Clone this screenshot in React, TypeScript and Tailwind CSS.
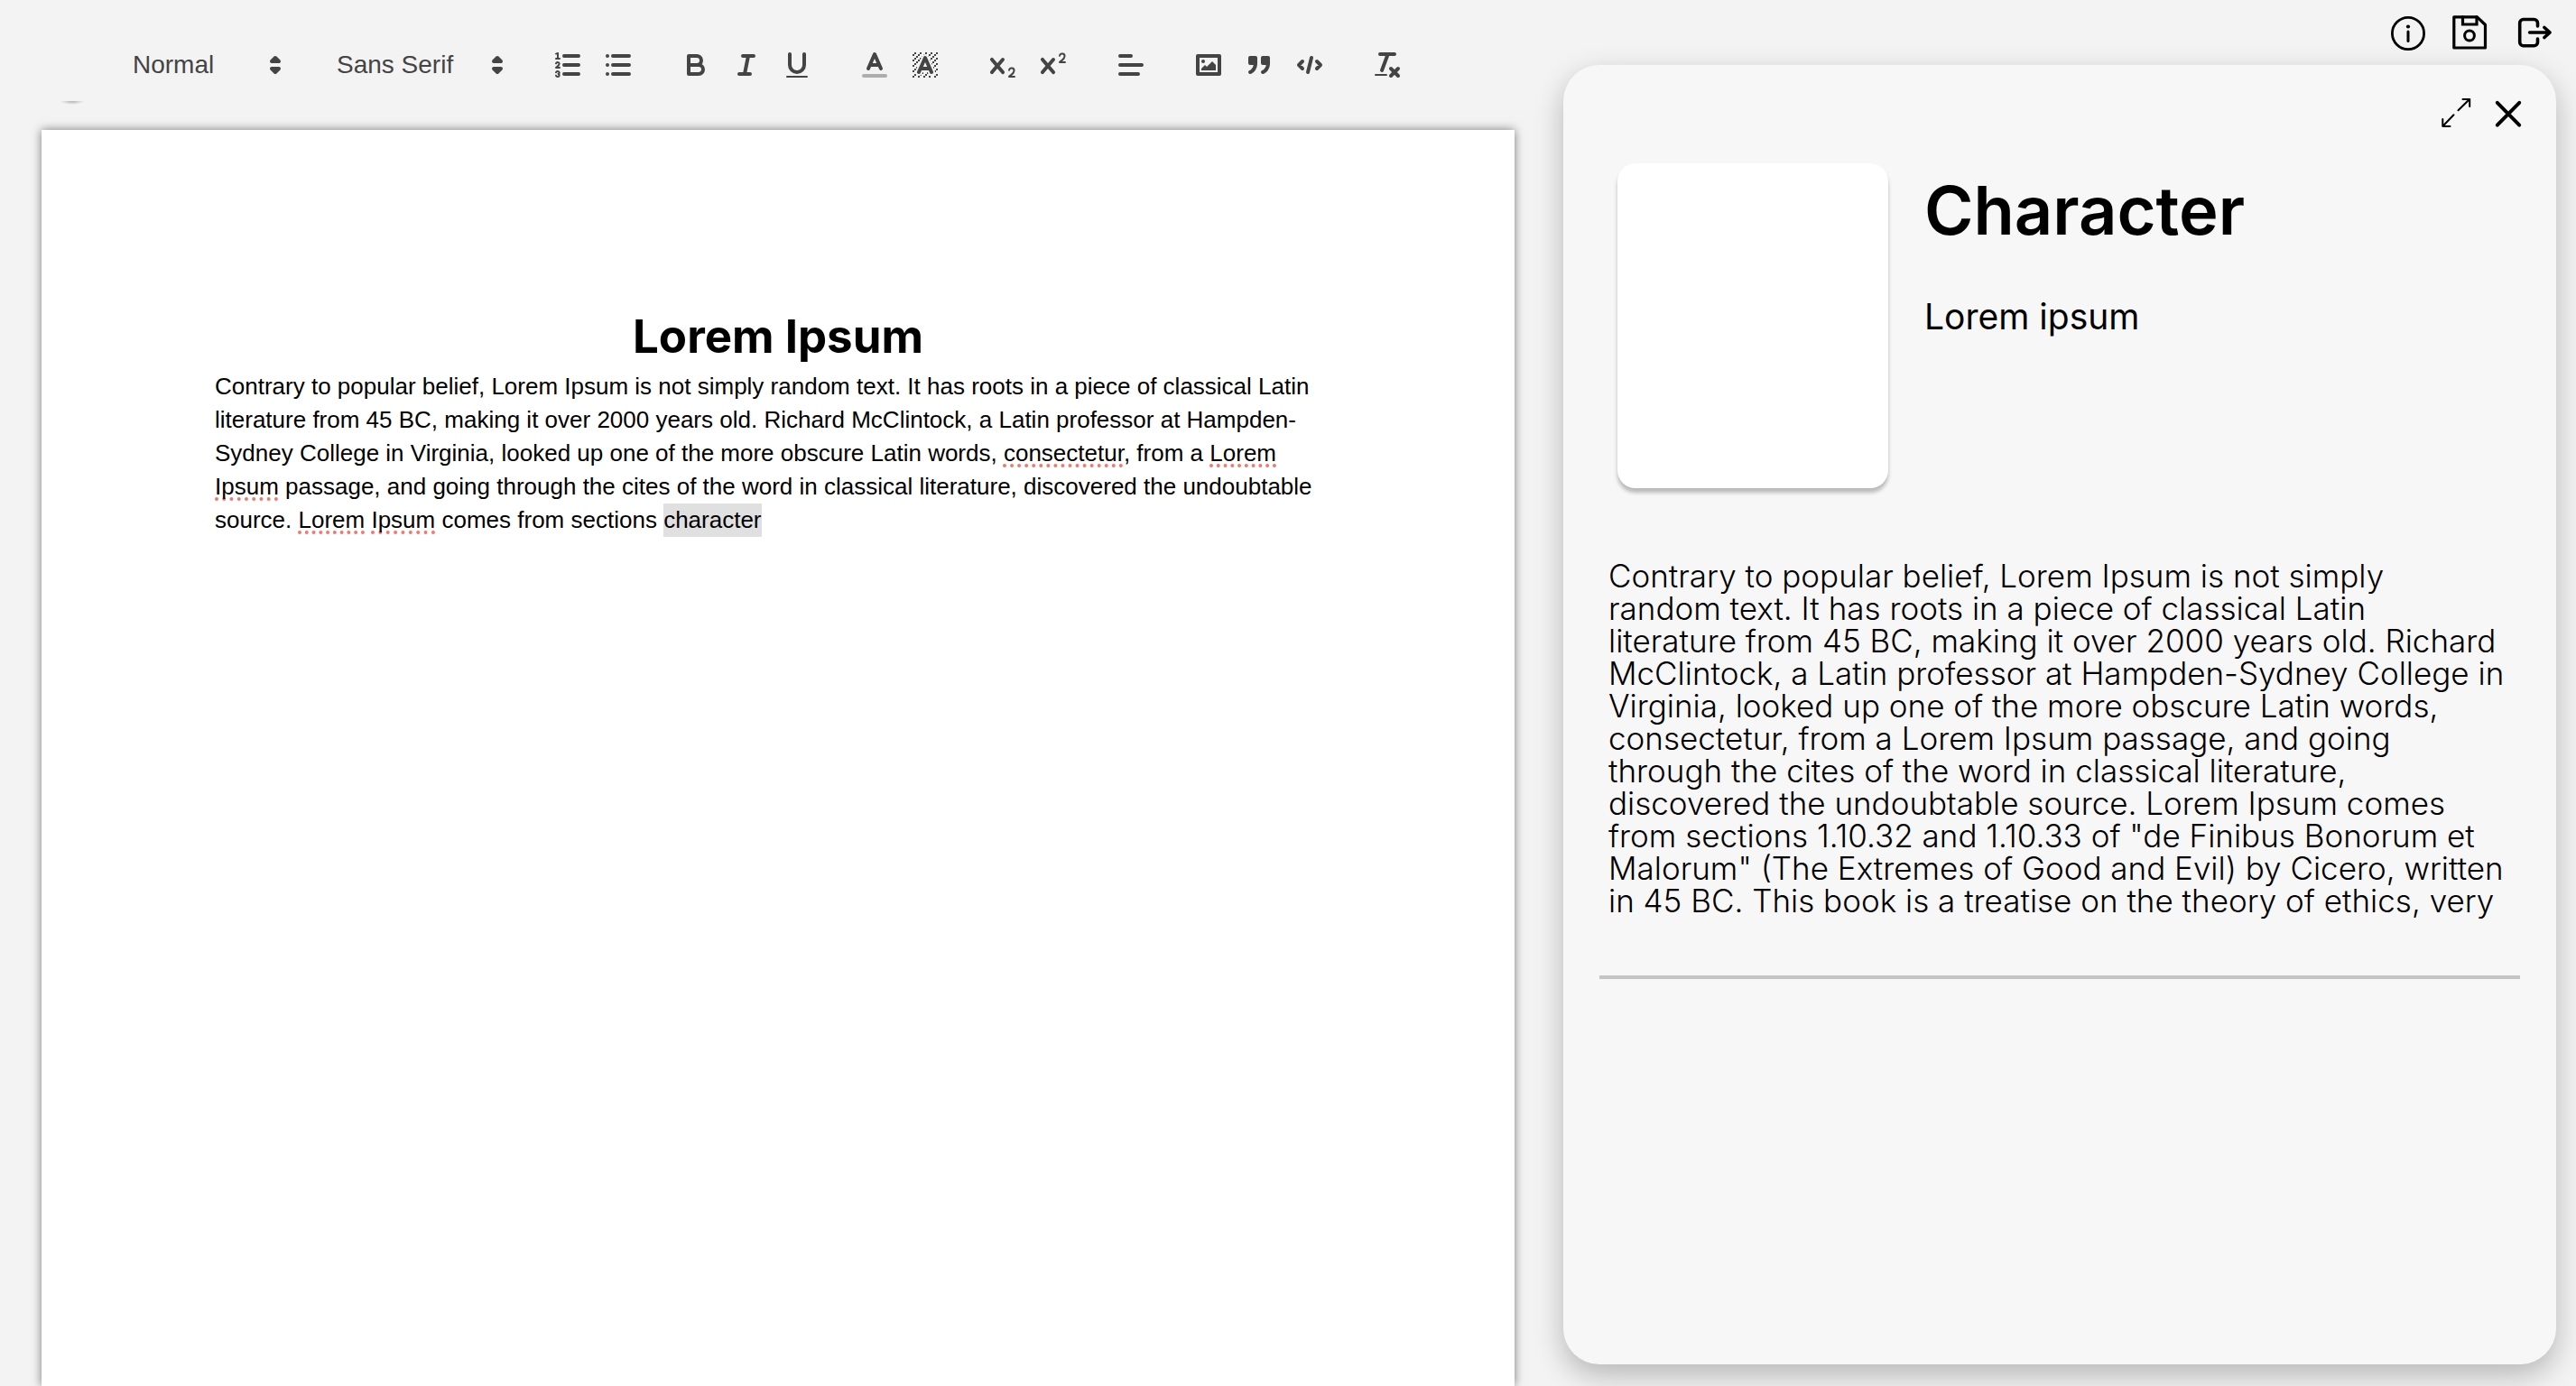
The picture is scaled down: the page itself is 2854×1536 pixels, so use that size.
import type { ReactNode } from 'react';

const stroke = 'fill-none stroke-[#444] stroke-2 [stroke-linecap:round] [stroke-linejoin:round]';
const solid = 'fill-[#444] stroke-[#444] stroke-2 [stroke-linecap:round] [stroke-linejoin:round]';
const thin = 'fill-none stroke-[#444] stroke-1 [stroke-linecap:round] [stroke-linejoin:round]';
const fill = 'fill-[#444]';

function Glyph({ children }: { children: ReactNode }) {
  return (
    <svg viewBox="0 0 18 18" className="size-9" aria-hidden="true">
      {children}
    </svg>
  );
}

function ToolButton({ label, children }: { label: string; children: ReactNode }) {
  return (
    <button type="button" aria-label={label} className="flex h-12 w-14 items-center justify-center">
      <Glyph>{children}</Glyph>
    </button>
  );
}

function Picker({ label, options, width }: { label: string; options: string[]; width: string }) {
  return (
    <label className={`relative flex h-12 items-center text-[#444] ${width}`}>
      <span className="sr-only">{label}</span>
      <select className="h-full w-full appearance-none bg-transparent pl-[18px] text-[28px] leading-normal font-medium outline-none">
        {options.map((o) => (
          <option key={o}>{o}</option>
        ))}
      </select>
      <svg viewBox="0 0 18 18" className="pointer-events-none absolute right-0.5 size-9" aria-hidden="true">
        <polygon className={solid} points="7 11 9 13 11 11 7 11" />
        <polygon className={solid} points="7 7 9 5 11 7 7 7" />
      </svg>
    </label>
  );
}

const hatchCells = [
  [4, 4], [2, 6], [3, 5], [4, 7], [2, 12], [2, 9], [2, 15], [3, 8], [12, 2], [11, 3], [2, 3], [6, 2], [3, 2],
  [5, 3], [9, 2], [15, 14], [13, 7], [15, 5], [14, 6], [15, 8], [14, 9], [14, 3], [15, 2], [12, 5], [13, 4],
  [9, 14], [8, 15], [5, 15], [11, 15], [14, 15], [15, 11],
];

function Toolbar() {
  return (
    <div role="toolbar" aria-label="Formatting" className="flex h-28 items-center gap-[30px] pt-12 pr-4 pb-4 pl-[83px]">
      <Picker label="Heading" options={['Normal', 'Heading 1', 'Heading 2']} width="w-[196px]" />
      <Picker label="Font" options={['Sans Serif', 'Serif', 'Monospace']} width="w-[216px]" />
      <div className="flex">
        <ToolButton label="Ordered list">
          <path className={stroke} d="M7 4H15M7 9H15M7 14H15" />
          <path className={thin} d="M2.5 5.5H4.5" />
          <path className={fill} d="M3.5,6A0.5,0.5,0,0,1,3,5.5V3.085l-0.276.138A0.5,0.5,0,0,1,2.053,3c-0.124-.247-0.023-0.324.224-0.447l1-.5A0.5,0.5,0,0,1,4,2.5v3A0.5,0.5,0,0,1,3.5,6Z" />
          <path className={thin} d="M4.5,10.5h-2c0-.234,1.85-1.076,1.85-2.234A0.959,0.959,0,0,0,2.5,8.156" />
          <path className={thin} d="M2.5,14.846a0.959,0.959,0,0,0,1.85-.109A0.7,0.7,0,0,0,3.75,14a0.688,0.688,0,0,0,.6-0.736,0.959,0.959,0,0,0-1.85-.109" />
        </ToolButton>
        <ToolButton label="Bullet list">
          <path className={stroke} d="M6 4H15M6 9H15M6 14H15M3 4H3M3 9H3M3 14H3" />
        </ToolButton>
      </div>
      <div className="flex">
        <ToolButton label="Bold">
          <path className={stroke} d="M5,4H9.5A2.5,2.5,0,0,1,12,6.5v0A2.5,2.5,0,0,1,9.5,9H5V4Z" />
          <path className={stroke} d="M5,9h5.5A2.5,2.5,0,0,1,13,11.5v0A2.5,2.5,0,0,1,10.5,14H5V9Z" />
        </ToolButton>
        <ToolButton label="Italic">
          <path className={stroke} d="M7 4H13M5 14H11M8 14L10 4" />
        </ToolButton>
        <ToolButton label="Underline">
          <path className={stroke} d="M5,3V9a4.012,4.012,0,0,0,4,4H9a4.012,4.012,0,0,0,4-4V3" />
          <rect className={fill} height="1" rx="0.5" width="12" x="3" y="15" />
        </ToolButton>
      </div>
      <div className="flex">
        <ToolButton label="Text colour">
          <path className={`${stroke} opacity-40`} d="M3 15H15" />
          <path className={stroke} d="M5.5 11L9 3L12.5 11M11.63 9H6.38" />
        </ToolButton>
        <ToolButton label="Background colour">
          <g className={fill}>
            {hatchCells.map(([x, y]) => (
              <rect key={`${x}-${y}`} x={x} y={y} width="1" height="1" />
            ))}
            <polygon points="6 6.868 6 6 5 6 5 7 5.942 7 6 6.868" />
            <polygon points="6.817 5 6 5 6 6 6.38 6 6.817 5" />
            <polygon points="4 11.439 4 11 3 11 3 12 3.755 12 4 11.439" />
            <polygon points="4.63 10 4 10 4 11 4.192 11 4.63 10" />
            <path d="M10.832,4.2L11,4.582V4H10.708A1.948,1.948,0,0,1,10.832,4.2Z" />
            <path d="M7,4.582L7.168,4.2A1.929,1.929,0,0,1,7.292,4H7V4.582Z" />
            <path d="M8,13H7.683l-0.351.8a1.933,1.933,0,0,1-.124.2H8V13Z" />
            <path d="M9,3H8V3.282A1.985,1.985,0,0,1,9,3Z" />
            <polygon points="13.447 10.174 13.469 10.225 13.472 10.232 13.808 11 14 11 14 10 13.37 10 13.447 10.174" />
            <path d="M3.775,14H3v1H4V14.314A1.97,1.97,0,0,1,3.775,14Z" />
            <polygon points="12 6.868 12 6 11.62 6 12 6.868" />
            <polygon points="12.933 9 13 9 13 8 12.495 8 12.933 9" />
            <path d="M6,14.926V15H7V14.316A1.993,1.993,0,0,1,6,14.926Z" />
            <path d="M10.668,13.8L10.317,13H10v1h0.792A1.947,1.947,0,0,1,10.668,13.8Z" />
            <path d="M14.332,12.2a1.99,1.99,0,0,1,.166.8H15V12H14.245Z" />
          </g>
          <path className={stroke} d="M5.5 13L9 5L12.5 13M11.63 11H6.38" />
        </ToolButton>
      </div>
      <div className="flex">
        <ToolButton label="Subscript">
          <path className={fill} d="M15.5,15H13.861a3.858,3.858,0,0,0,1.914-2.975,1.8,1.8,0,0,0-1.6-1.751A1.921,1.921,0,0,0,12.021,11.7a0.50013,0.50013,0,1,0,.957.291h0a0.914,0.914,0,0,1,1.053-.725,0.81,0.81,0,0,1,.744.762c0,1.076-1.16971,1.86982-1.93971,2.43082A1.45639,1.45639,0,0,0,12,15.5a0.5,0.5,0,0,0,.5.5h3A0.5,0.5,0,0,0,15.5,15Z" />
          <path className={fill} d="M9.65,5.241a1,1,0,0,0-1.409.108L6,7.964,3.759,5.349A1,1,0,0,0,2.192,6.59178Q2.21541,6.6213,2.241,6.649L4.684,9.5,2.241,12.35A1,1,0,0,0,3.71,13.70722q0.02557-.02768.049-0.05722L6,11.036,8.241,13.65a1,1,0,1,0,1.567-1.24277Q9.78459,12.3777,9.759,12.35L7.316,9.5,9.759,6.651A1,1,0,0,0,9.65,5.241Z" />
        </ToolButton>
        <ToolButton label="Superscript">
          <path className={fill} d="M15.5,7H13.861a4.015,4.015,0,0,0,1.914-2.975,1.8,1.8,0,0,0-1.6-1.751A1.922,1.922,0,0,0,12.021,3.7a0.5,0.5,0,1,0,.957.291,0.917,0.917,0,0,1,1.053-.725,0.81,0.81,0,0,1,.744.762c0,1.077-1.164,1.925-1.934,2.486A1.423,1.423,0,0,0,12,7.5a0.5,0.5,0,0,0,.5.5h3A0.5,0.5,0,0,0,15.5,7Z" />
          <path className={fill} d="M9.65,5.241a1,1,0,0,0-1.409.108L6,7.964,3.759,5.349A1,1,0,0,0,2.192,6.59178Q2.21541,6.6213,2.241,6.649L4.684,9.5,2.241,12.35A1,1,0,0,0,3.71,13.70722q0.02557-.02768.049-0.05722L6,11.036,8.241,13.65a1,1,0,1,0,1.567-1.24277Q9.78459,12.3777,9.759,12.35L7.316,9.5,9.759,6.651A1,1,0,0,0,9.65,5.241Z" />
        </ToolButton>
      </div>
      <ToolButton label="Align">
        <path className={stroke} d="M3 9H15M3 14H13M3 4H9" />
      </ToolButton>
      <div className="flex">
        <ToolButton label="Insert image">
          <rect className={stroke} height="10" width="12" x="3" y="4" />
          <circle className={fill} cx="6" cy="7" r="1" />
          <polyline className={fill} points="5 12 5 11 7 9 8 10 11 7 13 9 13 12 5 12" />
        </ToolButton>
        <ToolButton label="Quote">
          <rect className={solid} height="3" width="3" x="4" y="5" />
          <rect className={solid} height="3" width="3" x="11" y="5" />
          <path className={solid} d="M7,8c0,4.031-3,5-3,5" />
          <path className={solid} d="M14,8c0,4.031-3,5-3,5" />
        </ToolButton>
        <ToolButton label="Code block">
          <path className={stroke} d="M5 7L3 9L5 11M13 7L15 9L13 11M10 5L8 13" />
        </ToolButton>
      </div>
      <ToolButton label="Clear formatting">
        <path className={stroke} d="M5 3H13M6 12L9.35 3M11 11L15 15M15 11L11 15" />
        <rect className={fill} height="1" rx="0.5" width="7" x="2" y="14" />
      </ToolButton>
    </div>
  );
}

function Misspelt({ children }: { children: ReactNode }) {
  return (
    <span className="underline decoration-[#f4766c] decoration-dotted decoration-4 underline-offset-[3px] [text-decoration-skip-ink:none]">
      {children}
    </span>
  );
}

function Document() {
  return (
    <article className="flex-1 bg-white px-48 pt-48 text-[26px] leading-[37px] text-black shadow-[0_0_10px_rgba(0,0,0,0.5)]">
      <h1 className="text-center font-[Inter,sans-serif] text-[51px] leading-[74px] font-bold">Lorem Ipsum</h1>
      <p>
        Contrary to popular belief, Lorem Ipsum is not simply random text. It has roots in a piece of classical Latin
        literature from 45 BC, making it over 2000 years old. Richard McClintock, a Latin professor at Hampden-Sydney
        College in Virginia, looked up one of the more obscure Latin words, <Misspelt>consectetur</Misspelt>, from a{' '}
        <Misspelt>Lorem</Misspelt>
        <br />
        <Misspelt>Ipsum</Misspelt> passage, and going through the cites of the word in classical literature, discovered
        the undoubtable source. <Misspelt>Lorem</Misspelt> <Misspelt>Ipsum</Misspelt> comes from sections{' '}
        <mark className="inline-block bg-[#e0e0e0] text-black">character</mark>
      </p>
    </article>
  );
}

function IconButton({ label, size, children }: { label: string; size: number; children: ReactNode }) {
  return (
    <button type="button" aria-label={label}>
      <svg
        viewBox={`0 0 ${size} ${size}`}
        width={size}
        height={size}
        fill="none"
        stroke="black"
        strokeLinecap="round"
        strokeLinejoin="round"
        aria-hidden="true"
      >
        {children}
      </svg>
    </button>
  );
}

function AppActions() {
  return (
    <div className="flex h-[72px] items-center justify-end gap-6">
      <IconButton label="Information" size={48}>
        <circle cx="28" cy="25" r="17.6" strokeWidth="2.8" />
        <circle cx="28" cy="17.5" r="2.1" fill="black" stroke="none" />
        <path d="M28 23V33.5" strokeWidth="3" />
      </IconButton>
      <IconButton label="Save" size={48}>
        <path d="M6.8 6.8H32.5L41.5 15.5V41H6.8Z" strokeWidth="3.2" />
        <path d="M16.5 6.8V15H32V6.8" strokeWidth="3.2" strokeLinejoin="miter" />
        <circle cx="24" cy="27.5" r="5.4" strokeWidth="3" />
      </IconButton>
      <IconButton label="Exit" size={48}>
        <path
          d="M27.5 17V13.5a4 4 0 0 0-4-4H11.7a4 4 0 0 0-4 4V34.7a4 4 0 0 0 4 4H23.5a4 4 0 0 0 4-4V31"
          strokeWidth="3.6"
        />
        <path d="M18.5 24H41M34.8 18.4L41.2 24L34.8 29.6" strokeWidth="3.4" />
      </IconButton>
    </div>
  );
}

function CharacterPanel() {
  return (
    <aside className="mb-6 flex-1 rounded-[40px] bg-[#f7f7f7] px-10 font-[Inter,sans-serif] text-black shadow-[0_12px_32px_rgba(0,0,0,0.25)]">
      <div className="-mr-[7px] flex justify-end gap-[18px] pt-[34px]">
        <IconButton label="Expand" size={40}>
          <path d="M22.5 16.3L35 4M27.5 4H35.2V12M17.5 21.3L5.3 34M5.3 26V34H13.5" strokeWidth="2" />
        </IconButton>
        <IconButton label="Close" size={40}>
          <path d="M7.8 7.8L32.2 32.6M32.2 7.8L7.8 32.6" strokeWidth="4" />
        </IconButton>
      </div>
      <div className="mt-[35px] flex gap-10 pl-5">
        <div className="h-[360px] w-[300px] shrink-0 rounded-[20px] bg-white shadow-[0_5px_4px_rgba(0,0,0,0.25)]" />
        <div className="pt-3">
          <h2 className="text-[74px] leading-[80px] font-semibold">Character</h2>
          <p className="mt-[54px] text-[39px] leading-[48px]">Lorem ipsum</p>
        </div>
      </div>
      <p className="mt-[79px] pl-2.5 text-[35px] leading-[36px] font-light">
        Contrary to popular belief, Lorem Ipsum is not simply
        <br />
        random text. It has roots in a piece of classical Latin
        <br />
        literature from 45 BC, making it over 2000 years old. Richard McClintock, a Latin professor at Hampden-Sydney
        College in Virginia, looked up one of the more obscure Latin words,
        <br />
        consectetur, from a Lorem Ipsum passage, and going
        <br />
        through the cites of the word in classical literature,
        <br />
        discovered the undoubtable source. Lorem Ipsum comes
        <br />
        from sections 1.10.32 and 1.10.33 of "de Finibus Bonorum et
        <br />
        Malorum" (The Extremes of Good and Evil) by Cicero, written
        <br />
        in 45 BC. This book is a treatise on the theory of ethics, very
      </p>
      <hr className="mt-[65px] border-t-4 border-[#c4c4c4]" />
    </aside>
  );
}

export default function App() {
  return (
    <div className="grid h-screen grid-cols-[1632fr_1100fr] gap-[54px] overflow-hidden bg-[#f3f3f3] pr-[22px] pl-[46px] font-['Liberation_Sans',Arial,sans-serif]">
      <main className="flex min-w-0 flex-col">
        <Toolbar />
        <div className="h-8 pl-5">
          <div className="h-1 w-7 bg-[radial-gradient(ellipse_at_top,#b4b4b4_0%,#f3f3f3_70%)]" />
        </div>
        <Document />
      </main>
      <div className="flex min-w-0 flex-col">
        <AppActions />
        <CharacterPanel />
      </div>
    </div>
  );
}
